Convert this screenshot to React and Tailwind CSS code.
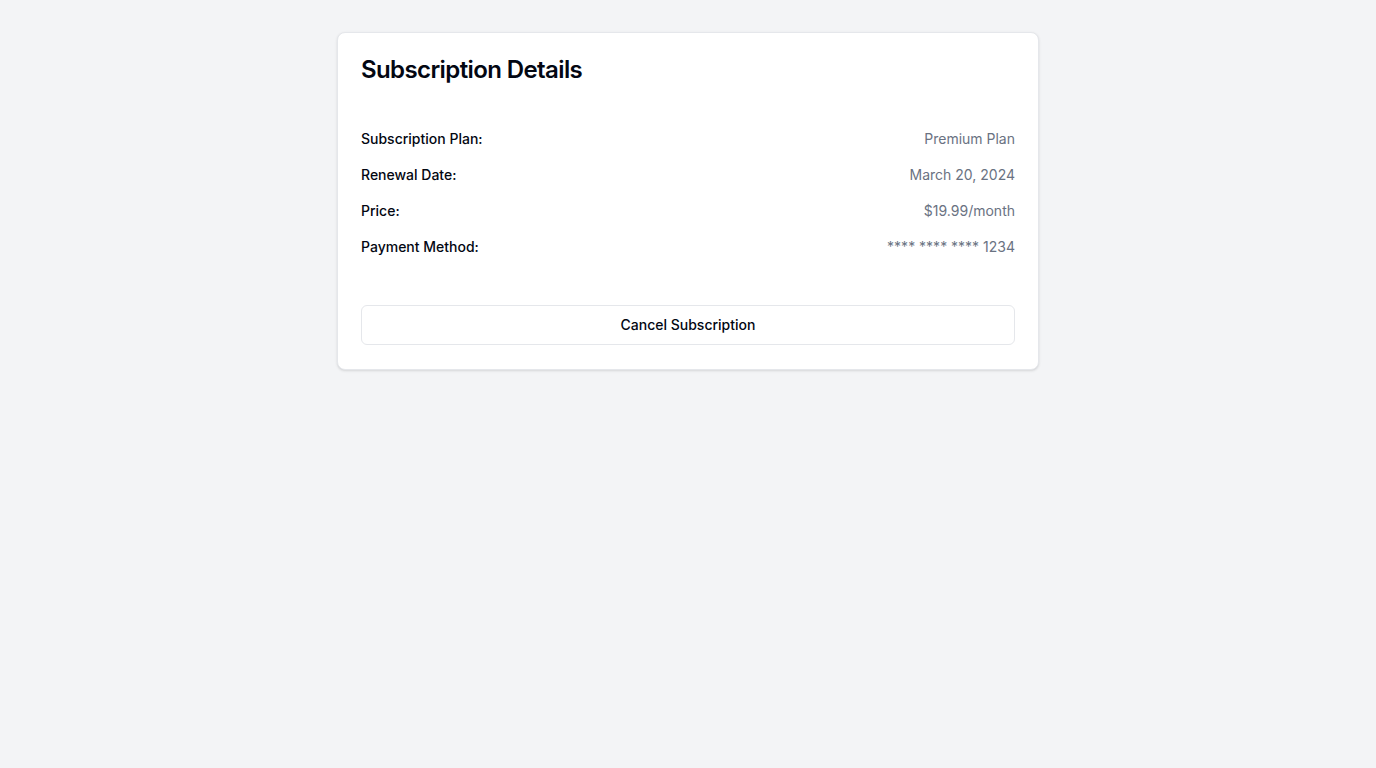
import React from 'react';

const rows = [
    { label: 'Subscription Plan:', value: 'Premium Plan' },
    { label: 'Renewal Date:', value: 'March 20, 2024' },
    { label: 'Price:', value: '$19.99/month' },
    { label: 'Payment Method:', value: '**** **** **** 1234' },
];

export default function App() {
    return (
        <div className="min-h-screen bg-gray-100 pt-8 font-['Inter',sans-serif]">
            <div className="mx-auto w-[702px] rounded-lg border border-gray-200 bg-white shadow-sm">
                <div className="px-[23px] pt-[25px]">
                    <h2 className="text-2xl font-semibold leading-6 tracking-tight text-gray-950">
                        Subscription Details
                    </h2>
                </div>
                <div className="mt-[47px] space-y-4 px-[23px]">
                    {rows.map((row) => (
                        <div key={row.label} className="flex items-center justify-between text-sm leading-5">
                            <span className="font-medium text-gray-950">{row.label}</span>
                            <span className="text-gray-500">{row.value}</span>
                        </div>
                    ))}
                </div>
                <div className="px-[23px] pb-6 pt-12">
                    <button className="h-10 w-full rounded-md border border-gray-200 bg-white text-sm font-medium text-gray-950">
                        Cancel Subscription
                    </button>
                </div>
            </div>
        </div>
    );
}
